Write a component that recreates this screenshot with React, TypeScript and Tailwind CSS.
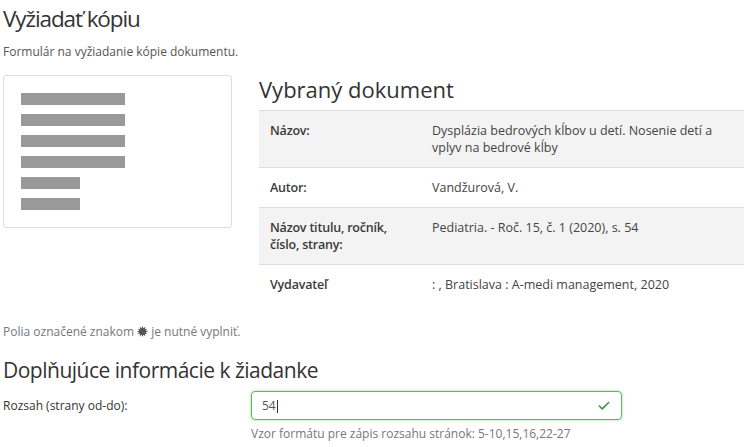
import { Check } from "lucide-react";

const rows = [
  { label: "Názov:", value: "Dysplázia bedrových kĺbov u detí. Nosenie detí a vplyv na bedrové kĺby", shade: true },
  { label: "Autor:", value: "Vandžurová, V.", shade: false },
  { label: "Názov titulu, ročník, číslo, strany:", value: "Pediatria. - Roč. 15, č. 1 (2020), s. 54", shade: true },
  { label: "Vydavateľ", value: ": , Bratislava : A-medi management, 2020", shade: false },
];

const bars = [104, 104, 104, 104, 59, 59];

const Burst = () => (
  <svg width="11" height="11" viewBox="0 0 20 20" className="inline-block mx-[3px] -mt-[2px] align-middle">
    <polygon
      fill="#555"
      points="10,0 11.6,4.1 15,1.3 14.3,5.7 18.7,5 15.9,8.4 20,10 15.9,11.6 18.7,15 14.3,14.3 15,18.7 11.6,15.9 10,20 8.4,15.9 5,18.7 5.7,14.3 1.3,15 4.1,11.6 0,10 4.1,8.4 1.3,5 5.7,5.7 5,1.3 8.4,4.1"
    />
  </svg>
);

const App = () => {
  return (
    <div className="w-[744px] h-[447px] overflow-hidden bg-white font-['Open_Sans',sans-serif] text-[#333]">
      <div className="pl-[3px]">
        <h1 className="text-[22.5px] leading-[30px] tracking-[-1.1px] pt-[4px]">Vyžiadať kópiu</h1>
        <p className="text-[12px] leading-[16px] mt-[10px] text-[#555]">
          Formulár na vyžiadanie kópie dokumentu.
        </p>

        <div className="flex items-start mt-[15px]">
          <div className="w-[229px] border border-[#ddd] rounded-[3px] px-[17px] py-[17px] flex flex-col gap-[9px]">
            {bars.map((w, i) => (
              <div key={i} className="h-[12px] bg-[#999]" style={{ width: w }} />
            ))}
          </div>

          <div className="ml-[27px] flex-1">
            <h2 className="text-[22px] leading-[28px] mb-[7px]">Vybraný dokument</h2>
            <table className="w-full text-[12.5px] leading-[17px] border-collapse">
              <tbody>
                {rows.map((r) => (
                  <tr key={r.label} className={`border-t border-[#ddd] ${r.shade ? "bg-[#f3f3f3]" : ""}`}>
                    <td className="w-[162px] px-[11px] py-[11px] align-top font-semibold tracking-[-0.2px] text-[#3a3a3a]">{r.label}</td>
                    <td className="px-[11px] py-[11px] align-top text-[#444]">{r.value}</td>
                  </tr>
                ))}
              </tbody>
            </table>
          </div>
        </div>

        <p className="text-[12px] leading-[16px] mt-[20px] text-[#777]">
          Polia označené znakom
          <Burst />
          je nutné vyplniť.
        </p>

        <h3 className="text-[21px] leading-[28px] tracking-[-0.5px] mt-[16px]">Doplňujúce informácie k žiadanke</h3>

        <div className="flex items-center mt-[7px]">
          <label className="w-[248px] text-[12px] text-[#333]">Rozsah (strany od-do):</label>
          <div className="w-[371px] h-[29px] border border-[#5cb85c] rounded-[4px] shadow-[0_0_3px_rgba(92,184,92,0.6)] flex items-center px-[10px]">
            <span className="flex-1 text-[12px] text-[#555]">
              54<span className="inline-block w-px h-[13px] bg-[#333] align-middle ml-px" />
            </span>
            <Check size={14} strokeWidth={3} className="text-[#3d9a4e]" />
          </div>
        </div>
        <p className="ml-[248px] mt-[6px] text-[12px] leading-[16px] text-[#777]">
          Vzor formátu pre zápis rozsahu stránok: 5-10,15,16,22-27
        </p>
      </div>
    </div>
  );
};

export default App;
